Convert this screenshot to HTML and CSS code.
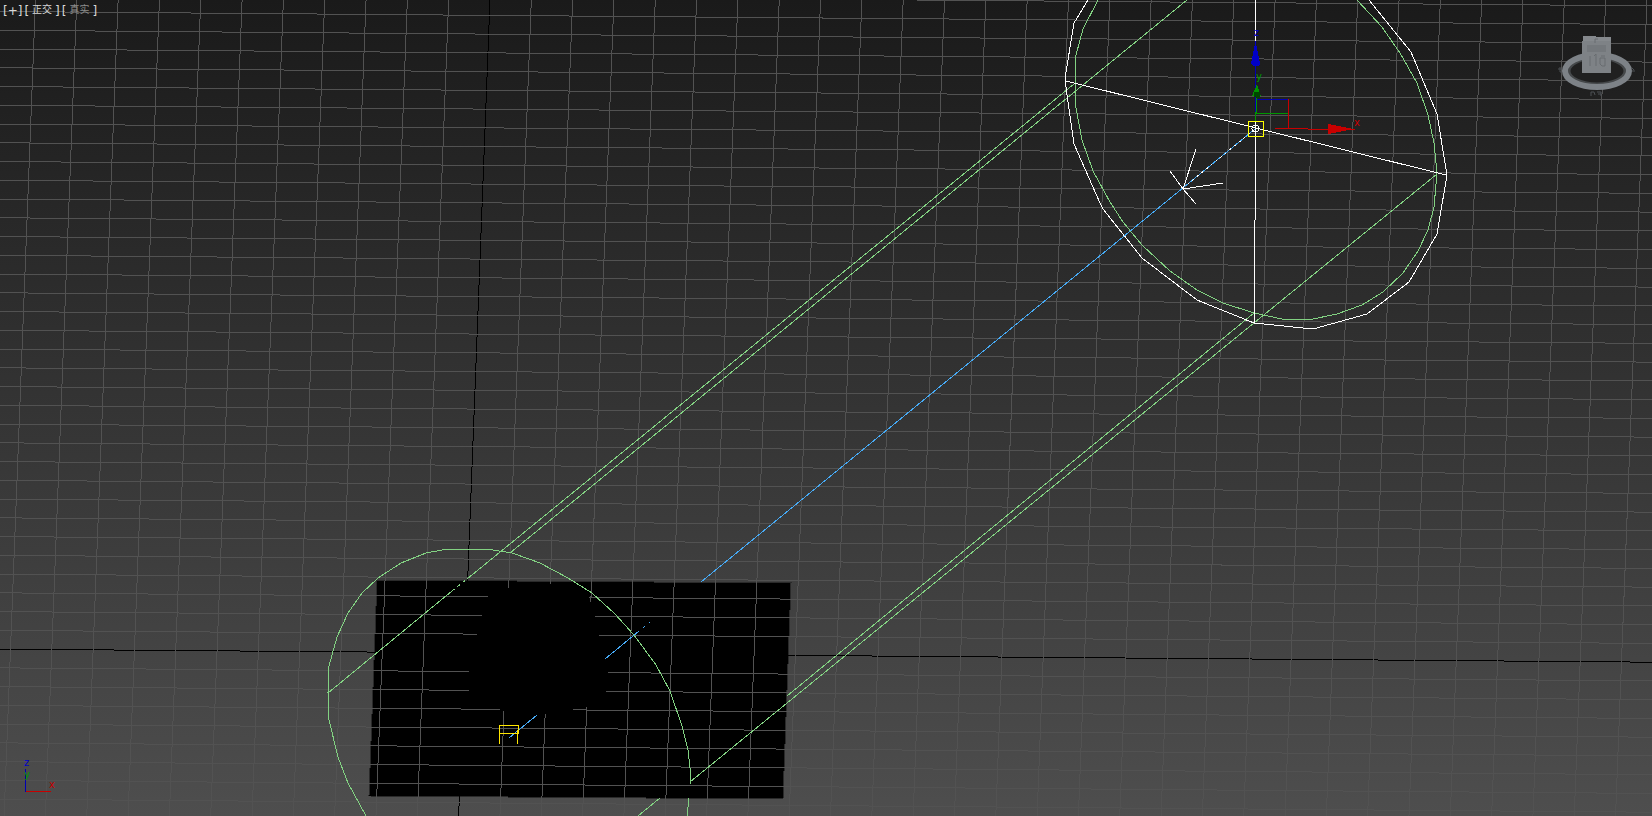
FILE: index.html
```html
<!DOCTYPE html>
<html lang="zh-CN">
<head>
    <meta charset="UTF-8">
    <meta name="viewport" content="width=device-width, initial-scale=1.0">
    <title>Viewport</title>
    <link rel="stylesheet" href="styles.css">
</head>
<body>

    <main class="viewport">
        <svg class="scene" aria-hidden="true">
            <!-- Dark plane -->
            <polygon class="plane" points="377,580 791,583 783,799 369,796"/>

            <!-- Grid, filled in by the script -->
            <path class="axis" id="axes"/>
            <path class="grid" id="grid"/>

            <!-- Sphere silhouette -->
            <polygon class="sphere" points="490,590 508,588 550,584 580,590 588,596 590,600 595,616 599,635 605,652 608,672 607,691 590,706 576,709 545,714 504,711 499,709 480,700 469,691 469,672 472,652 477,635 482,616"/>

            <!-- Light cone, target end -->
            <polyline class="cone" points="366,816 348,783 338,757 329,720 328,693 329,666 337,637 348,613 362,593 378,578 401,563 426,553 448,549 486,549 512,553 540,563 568,578 592,593 615,614 634,635 656,665 670,691 682,726 688,750 690,768 691,784"/>
            <path class="cone" d="M689 798L687 816M638 816L660 798"/>
            <path class="cone" d="M328 693L452 591M467 579L1074 84M510 553L1187 0M690 782L1437 174M787 696L1254 313"/>
            <path class="cone cone-hidden" d="M452 591L467 579"/>

            <!-- Light cone, source end -->
            <polyline class="cone" points="1098,0 1083,29 1076,55 1075,84 1076,108 1082,140 1093,171 1110,202 1123,222 1142,245 1170,271 1197,290 1223,303 1254,313 1282,319 1313,319 1337,314 1362,305 1383,292 1403,273 1418,251 1428,230 1434,207 1437,173 1434,143 1428,115 1417,83 1400,53 1382,27 1357,0"/>
            <polyline class="falloff" points="1088,0 1074,23 1066,72 1065,79 1067,95 1074,144 1100,203 1103,209 1142,258 1197,300 1254,323 1313,329 1367,314 1409,282 1437,234 1447,175 1437,114 1411,52 1369,0"/>
            <path class="falloff" d="M1066 81L1446 175M1255.5 0V220M1254.5 220V323"/>

            <!-- Target line -->
            <path class="target-line" d="M701 582L1255 129M605 659L639 631M643 628L645 626M649 623L650 622M509 738L537 715"/>
            <path class="falloff direction" d="M1183 188L1255 129"/>
            <path class="falloff" d="M1183 189L1196 149M1183 189L1223 183M1183 189L1170 171M1183 189L1196 204"/>

            <!-- Light target -->
            <path class="selected target" d="M499.5 744V725.5H518.5V734M499.5 733.5H518.5M517.5 730V744"/>

            <!-- Move gizmo -->
            <path class="gizmo-z" d="M1255.5 41V112M1256 99.5H1288"/>
            <polygon class="fill-z" points="1255.5,41 1260,64 1258,66 1253,66 1251,64"/>
            <path class="gizmo-y" d="M1255.5 112V122M1256.5 96V113.5H1288"/>
            <polygon class="fill-y" points="1257,84 1261,96 1252,96"/>
            <polygon class="fill-y-dark" points="1254,92 1260,92 1260,97 1257,98 1254,97"/>
            <path class="gizmo-x" d="M1288.5 99V128M1275 128.5H1308M1308 129.5H1355"/>
            <polygon class="fill-x" points="1328,124 1354,129 1328,134"/>
            <text class="axis-name fill-z" x="1254" y="36">z</text>
            <text class="axis-name fill-y" x="1256" y="80">y</text>
            <text class="axis-name fill-x" x="1354" y="126">x</text>
            <rect class="selected" x="1248.5" y="121.5" width="15" height="15"/>
            <circle class="falloff" cx="1255.5" cy="128.5" r="3.5"/>
        </svg>

        <header class="labels">
            <button type="button">[+]</button>
            <button type="button">[<span class="word">正交</span>]</button>
            <button type="button">[<span class="word shade">真实</span>]</button>
        </header>

        <!-- View cube -->
        <svg class="viewcube" viewBox="0 0 80 62" role="img" aria-label="ViewCube">
            <ellipse class="well" cx="40" cy="35" rx="30" ry="15"/>
            <ellipse class="ring-shade" cx="40" cy="35" rx="28" ry="13"/>
            <ellipse class="ring" cx="40" cy="35" rx="32" ry="16"/>
            <polygon class="cube" points="26,0 39,0 39,1 54,1 54,37 25,37 25,5 26,5"/>
            <polygon class="cube-top" points="26,0 39,0 39,1 54,1 54,5 26,5"/>
            <rect class="cube-band" x="30" y="9" width="19" height="7"/>
            <path class="cube-mark" d="M38 7V3H41M33 20V30M37 20L39 18V30M44 20H48M43 22V28L45 30H48V22Z"/>
            <path class="compass" d="M1 33H5M3 31V36H5M74 31L77 34M75 35H78M34 60V56H37L38 59M40 56H44V60M41 58H44"/>
        </svg>

        <!-- World axis tripod -->
        <svg class="tripod" viewBox="0 0 40 40" role="img" aria-label="World axis">
            <path class="gizmo-z" d="M5.5 13V36"/>
            <path class="gizmo-x" d="M6 35.5H31"/>
            <text class="axis-name fill-z" x="4" y="10">z</text>
            <text class="axis-name fill-y" x="4" y="22">y</text>
            <text class="axis-name fill-x" x="29" y="32">x</text>
        </svg>
    </main>

    <script>
        // Home grid: both line families are slightly tilted
        const originX = 490;
        const originY = 649.1;
        const columnStep = 41.32;
        const rowStep = 18.753;
        const lean = 1 / 26;
        const drop = 1 / 126.3;

        function column(n, height) {
            const x = originX + n * columnStep;
            return `M${x} 0L${x - height * lean} ${height}`;
        }

        function row(n, width) {
            const y = originY + n * rowStep;
            return `M0 ${y}L${width} ${y + width * drop}`;
        }

        function drawGrid() {
            const width = window.innerWidth;
            const height = window.innerHeight;
            const columns = Math.ceil(width / columnStep);
            const rows = Math.ceil(height / rowStep);
            let lines = '';

            for (let n = -12; n <= columns; n++) {
                if (n !== 0) lines += column(n, height);
            }
            for (let n = -36; n <= rows; n++) {
                if (n !== 0) lines += row(n, width);
            }

            document.getElementById('grid').setAttribute('d', lines);
            document.getElementById('axes').setAttribute('d', column(0, height) + row(0, width));
        }

        drawGrid();
        window.addEventListener('resize', drawGrid);
    </script>

</body>
</html>
```
FILE: styles.css
```css
/* Basic reset */
* {
    margin: 0;
    padding: 0;
    box-sizing: border-box;
}

body {
    font-family: "DejaVu Sans", "Noto Sans CJK SC", sans-serif;
    background-color: #1b1b1b;
}

.viewport {
    position: relative;
    display: grid;
    grid-template-columns: 1fr auto;
    grid-template-rows: 1fr auto;
    min-height: 100vh;
    overflow: hidden;
    background: linear-gradient(#1a1a1a, #4e4e4e);
}

/* Scene */
.scene {
    position: absolute;
    inset: 0;
    width: 100%;
    height: 100%;
    fill: none;
    stroke-width: 1px;
    shape-rendering: crispEdges;
}

.grid {
    stroke: #525252;
}

.axis {
    stroke: #000;
}

.plane {
    fill: #000;
    stroke: #2a2a2a;
}

.sphere {
    fill: #000;
}

.cone {
    stroke: #82d282;
}

.cone-hidden {
    stroke-dasharray: 3 4;
}

.falloff {
    stroke: #fff;
}

.target-line {
    stroke: #46aaf5;
}

.direction {
    stroke-dasharray: 2 4;
}

.selected {
    stroke: #ff0;
}

.target {
    stroke: #ffe600;
}

/* Axis colours */
.gizmo-x {
    stroke: #c80000;
}

.gizmo-y {
    stroke: #009600;
}

.gizmo-z {
    stroke: #0000b4;
}

.fill-x {
    fill: #c80000;
}

.fill-y {
    fill: #009600;
}

.fill-y-dark {
    fill: #004600;
}

.fill-z {
    fill: #0000c8;
}

.axis-name {
    font-size: 10px;
}

/* Viewport labels */
.labels {
    position: relative;
    display: flex;
    align-items: flex-start;
    gap: 2px;
    padding: 4px 3px;
}

.labels button {
    display: flex;
    border: none;
    background: none;
    color: #d8d8d8;
    font-family: inherit;
    font-size: 12px;
    line-height: 14px;
    cursor: pointer;
}

.word {
    padding: 0 3px;
    font-size: 10px;
    line-height: 12px;
}

.shade {
    color: #8c8c8c;
}

/* View cube */
.viewcube {
    position: relative;
    width: 80px;
    height: 62px;
    margin: 36px 15px 0 0;
    fill: none;
}

.well {
    fill: #202020;
}

.ring-shade {
    stroke: #45484a;
    stroke-width: 3px;
}

.ring {
    stroke: #7d8287;
    stroke-width: 6px;
}

.cube {
    fill: #7e8286;
}

.cube-top {
    fill: #85898d;
}

.cube-band {
    fill: #74787c;
}

.cube-mark {
    stroke: #686c70;
}

.compass {
    stroke: #4c5054;
}

/* World axis */
.tripod {
    position: relative;
    grid-row: 2;
    width: 40px;
    height: 40px;
    margin: 0 0 20px 20px;
}
```
